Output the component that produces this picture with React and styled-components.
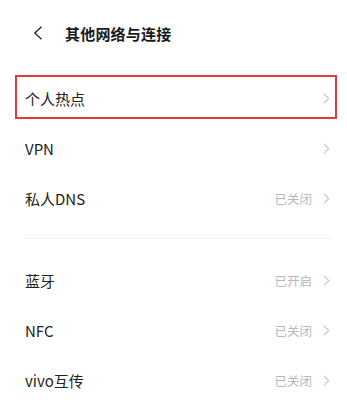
import React from "react";
import styled, { createGlobalStyle } from "styled-components";

const Global = createGlobalStyle`
  html, body { margin: 0; padding: 0; background: #fff; }
  body { font-family: "Noto Sans CJK SC", "Noto Sans", sans-serif; -webkit-font-smoothing: antialiased; }
`;

const Page = styled.div`
  width: 347px;
  height: 404px;
  overflow: hidden;
  background: #fff;
`;

const Header = styled.div`
  height: 66px;
  display: flex;
  align-items: center;
  padding-left: 33px;
  gap: 22px;
`;

const Title = styled.div`
  font-size: 15px;
  font-weight: 700;
  color: #1a1a1a;
  letter-spacing: 0.2px;
`;

const Group = styled.div`
  display: flex;
  flex-direction: column;
  padding-top: ${(p) => (p.$first ? "7px" : "0")};
`;

const Row = styled.div`
  position: relative;
  height: 50px;
  margin: 0 10px 0 15px;
  padding: 0 7px 0 10px;
  display: flex;
  align-items: center;
  justify-content: space-between;
  &::after {
    content: "";
    display: ${(p) => (p.$highlight ? "block" : "none")};
    position: absolute;
    left: 0;
    right: 0;
    top: 2px;
    bottom: 4px;
    border: 2px solid #e2393d;
    pointer-events: none;
  }
`;

const Label = styled.span`
  font-size: 15px;
  color: #222;
`;

const Right = styled.div`
  display: flex;
  align-items: center;
  gap: 11px;
`;

const Status = styled.span`
  font-size: 12.5px;
  color: #b8b8b8;
`;

const Divider = styled.div`
  height: 1px;
  background: #f0f0f0;
  margin: 15px 16px 16px 25px;
`;

const Chevron = () => (
  <svg width="7" height="11" viewBox="0 0 7 11">
    <path d="M1 0.8 L5.8 5.5 L1 10.2" fill="none" stroke="#c4c4c4" strokeWidth="1.1" />
  </svg>
);

const Back = () => (
  <svg width="10" height="14" viewBox="0 0 10 14">
    <path d="M8.5 0.8 L1.8 7 L8.5 13.2" fill="none" stroke="#222" strokeWidth="1.3" />
  </svg>
);

const Item = ({ label, status, highlight }) => (
  <Row $highlight={highlight}>
    <Label>{label}</Label>
    <Right>
      {status && <Status>{status}</Status>}
      <Chevron />
    </Right>
  </Row>
);

export default function App() {
  return (
    <Page>
      <Global />
      <Header>
        <Back />
        <Title>其他网络与连接</Title>
      </Header>
      <Group $first>
        <Item label="个人热点" highlight />
        <Item label="VPN" />
        <Item label="私人DNS" status="已关闭" />
      </Group>
      <Divider />
      <Group>
        <Item label="蓝牙" status="已开启" />
        <Item label="NFC" status="已关闭" />
        <Item label="vivo互传" status="已关闭" />
      </Group>
    </Page>
  );
}
